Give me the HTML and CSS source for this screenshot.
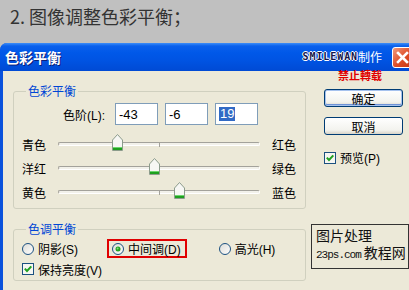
FILE: index.html
```html
<!DOCTYPE html>
<html lang="zh">
<head>
<meta charset="utf-8">
<title>色彩平衡</title>
<link rel="stylesheet" href="styles.css">
</head>
<body>
<div class="heading">2. 图像调整色彩平衡；</div>
<div class="dialog">
  <div class="titlebar">
    <span class="title">色彩平衡</span>
    <span class="brand"><span class="brand-en">SMILEWAN</span>制作</span>
    <span class="close">
      <svg width="13" height="13" viewBox="0 0 13 13"><path d="M2 2 L11 11 M11 2 L2 11" stroke="#fff" stroke-width="2.6" stroke-linecap="square" fill="none"/></svg>
    </span>
  </div>
  <div class="stamp">禁止轉载</div>
  <div class="body">
    <div class="left">
      <div class="group g1">
        <span class="legend">色彩平衡</span>
        <div class="levels">
          <span class="levels-label">色阶(L):</span>
          <span class="field">-43</span>
          <span class="field">-6</span>
          <span class="field"><span class="sel">19</span></span>
        </div>
        <div class="sliders">
          <div class="slider-row">
            <span>青色</span>
            <div class="track"><i class="tick"></i>
              <svg class="thumb" style="left:53px" viewBox="0 0 11 17"><path d="M0.5 6 L5.5 0.5 L10.5 6 V16.5 H0.5 Z" fill="#F7F7F4" stroke="#8C9C8C"/><rect x="1" y="13" width="9" height="3" fill="#1FA01F"/><rect x="1" y="13" width="9" height="1" fill="#6CD66C"/></svg>
            </div>
            <span class="rl">红色</span>
          </div>
          <div class="slider-row">
            <span>洋红</span>
            <div class="track"><i class="tick"></i>
              <svg class="thumb" style="left:90px" viewBox="0 0 11 17"><path d="M0.5 6 L5.5 0.5 L10.5 6 V16.5 H0.5 Z" fill="#F7F7F4" stroke="#8C9C8C"/><rect x="1" y="13" width="9" height="3" fill="#1FA01F"/><rect x="1" y="13" width="9" height="1" fill="#6CD66C"/></svg>
            </div>
            <span class="rl">绿色</span>
          </div>
          <div class="slider-row">
            <span>黄色</span>
            <div class="track"><i class="tick"></i>
              <svg class="thumb" style="left:115px" viewBox="0 0 11 17"><path d="M0.5 6 L5.5 0.5 L10.5 6 V16.5 H0.5 Z" fill="#F7F7F4" stroke="#8C9C8C"/><rect x="1" y="13" width="9" height="3" fill="#1FA01F"/><rect x="1" y="13" width="9" height="1" fill="#6CD66C"/></svg>
            </div>
            <span class="rl">蓝色</span>
          </div>
        </div>
      </div>
      <div class="group g2">
        <span class="legend">色调平衡</span>
        <div class="radios">
          <span class="opt opt1">
            <svg class="radio" viewBox="0 0 12 12"><defs><linearGradient id="rg" x1="0" y1="0" x2="1" y2="1"><stop offset="0" stop-color="#DCDBD5"/><stop offset="1" stop-color="#FFFFFF"/></linearGradient></defs><circle cx="6" cy="6" r="5.5" fill="url(#rg)" stroke="#1C5180"/></svg>
            阴影(S)
          </span>
          <span class="opt opt-box">
            <svg class="radio" viewBox="0 0 12 12"><circle cx="6" cy="6" r="5.5" fill="url(#rg)" stroke="#1C5180"/><circle cx="6" cy="6" r="2.5" fill="#21A121"/><circle cx="5.6" cy="5.6" r="1" fill="#7EDC7E"/></svg>
            中间调(D)
          </span>
          <span class="opt opt3">
            <svg class="radio" viewBox="0 0 12 12"><circle cx="6" cy="6" r="5.5" fill="url(#rg)" stroke="#1C5180"/></svg>
            高光(H)
          </span>
        </div>
        <div class="check-row">
          <svg class="check" viewBox="0 0 12 12"><rect x="0.5" y="0.5" width="11" height="11" fill="#F6F6F2" stroke="#1C5180"/><path d="M2.8 5.6 L5 8 L9.3 3.4" stroke="#21A121" stroke-width="2" fill="none"/></svg>
          保持亮度(V)
        </div>
      </div>
    </div>
    <div class="right">
      <div class="btn btn-default">确定</div>
      <div class="btn">取消</div>
      <div class="preview">
        <svg class="check" viewBox="0 0 12 12"><rect x="0.5" y="0.5" width="11" height="11" fill="#F6F6F2" stroke="#1C5180"/><path d="M2.8 5.6 L5 8 L9.3 3.4" stroke="#21A121" stroke-width="2" fill="none"/></svg>
        预览(P)
      </div>
      <div class="wm">
        <div class="wm-1">图片处理</div>
        <div class="wm-2"><span class="wm-url">23ps.com</span><span class="wm-cn">教程网</span></div>
      </div>
    </div>
  </div>
</div>
</body>
</html>
```
FILE: styles.css
```css
html, body {
  margin: 0;
  padding: 0;
}
body {
  width: 409px;
  height: 290px;
  overflow: hidden;
  background: #C0C0C0;
  font-family: "Liberation Sans", "Noto Sans CJK SC", sans-serif;
  font-size: 12px;
  color: #000;
}
.heading {
  height: 43px;
  box-sizing: border-box;
  padding: 6px 0 0 10px;
  font: 18px/21px "Noto Sans CJK SC", sans-serif;
  color: #333;
}
.dialog {
  position: relative;
  width: 416px;
  background: #0A52DC;
  border-radius: 7px 7px 0 0;
}
.titlebar {
  height: 28px;
  display: flex;
  align-items: center;
  padding: 0 3px 0 5px;
  border-radius: 7px 7px 0 0;
  background: linear-gradient(#3D8EF8 0, #0A60EC 3px, #0058E8 10px, #0054E3 60%, #004AD4 100%);
}
.title {
  font: bold 14px/16px "Noto Sans CJK SC", sans-serif;
  color: #fff;
  text-shadow: 1px 1px 0 #0A1E78;
}
.brand {
  margin-left: auto;
  margin-right: 10px;
  display: flex;
  align-items: center;
  color: #fff;
  font: 12px/14px "Noto Sans CJK SC", sans-serif;
}
.brand-en {
  font: bold 10px/12px "DejaVu Sans Mono", monospace;
  letter-spacing: 0.9px;
  color: #15154A;
  text-shadow: 1px 0 0 #fff, -1px 0 0 #fff, 0 1px 0 #fff, 0 -1px 0 #fff;
}
.close {
  width: 21px;
  height: 21px;
  box-sizing: border-box;
  border: 1px solid #fff;
  border-radius: 3px;
  background: linear-gradient(135deg, #F29A7C, #DD4B26 55%, #C63915);
  display: flex;
  align-items: center;
  justify-content: center;
}
.stamp {
  position: absolute;
  left: 338px;
  top: 26px;
  font: bold 11px/12px "Noto Sans CJK SC", sans-serif;
  color: #E00000;
  z-index: 2;
}
.body {
  display: flex;
  margin-left: 3px;
  height: 219px;
  background: #ECE9D8;
  overflow: hidden;
}
.left {
  width: 303px;
  flex: none;
  box-sizing: border-box;
  padding-left: 10px;
}
.group {
  position: relative;
  border: 1px solid #D0D0BF;
  border-radius: 3px;
  margin-top: 20px;
}
.legend {
  position: absolute;
  top: -9px;
  left: 12px;
  padding: 0 2px;
  background: #ECE9D8;
  color: #0046D5;
  line-height: 16px;
  font-family: "Noto Sans CJK SC", sans-serif;
}
.g1 {
  padding: 11px 0 4px 0;
}
.levels {
  display: flex;
  align-items: center;
  height: 22px;
}
.levels-label {
  width: 101px;
  box-sizing: border-box;
  padding-right: 10px;
  text-align: right;
  font-size: 12px;
}
.field {
  width: 43px;
  height: 22px;
  box-sizing: border-box;
  border: 1px solid #7F9DB9;
  background: #fff;
  margin-right: 7px;
  padding-left: 3px;
  font-size: 13px;
  display: flex;
  align-items: center;
}
.sel {
  background: #316AC5;
  color: #fff;
  line-height: 14px;
  padding: 0 1px;
}
.sliders {
  margin-top: 7px;
}
.slider-row {
  display: grid;
  grid-template-columns: 36px 202px auto;
  align-items: center;
  height: 24px;
  padding-left: 8px;
  font-family: "Noto Sans CJK SC", sans-serif;
}
.rl {
  margin-left: 12px;
}
.track {
  position: relative;
  height: 4px;
  box-sizing: border-box;
  border: 1px solid;
  border-color: #A3A29B #FFFFFF #FFFFFF #A3A29B;
  background: #F2F1EA;
  border-radius: 2px;
}
.tick {
  position: absolute;
  left: 100px;
  top: -1px;
  width: 1px;
  height: 5px;
  background: #A3A29B;
}
.thumb {
  position: absolute;
  top: -9px;
  width: 11px;
  height: 17px;
}
.g2 {
  padding: 9px 0 4px 8px;
}
.radios {
  display: flex;
  align-items: center;
  height: 19px;
}
.opt {
  display: flex;
  align-items: center;
  gap: 4px;
}
.opt1 {
  width: 85px;
}
.opt-box {
  height: 19px;
  box-sizing: border-box;
  border: 2px solid #E00000;
  padding: 0 4px 0 3px;
}
.opt3 {
  margin-left: 32px;
}
.radio {
  width: 12px;
  height: 12px;
  flex: none;
}
.check {
  width: 12px;
  height: 12px;
  flex: none;
}
.check-row {
  margin-top: 4px;
  height: 14px;
  display: flex;
  align-items: center;
  gap: 4px;
}
.right {
  flex: none;
  width: 104px;
  padding-top: 18px;
}
.btn {
  margin-left: 18px;
  width: 79px;
  height: 18px;
  box-sizing: border-box;
  border: 1px solid #003C74;
  border-radius: 3px;
  background: linear-gradient(#FFFFFF, #F3F3EE 75%, #D8D4C8);
  display: flex;
  align-items: center;
  justify-content: center;
  font-family: "Noto Sans CJK SC", sans-serif;
}
.btn-default {
  box-shadow: inset 0 0 0 1px #A6C2EE, inset 0 -1px 0 1px #6F93D6;
}
.btn + .btn {
  margin-top: 10px;
}
.preview {
  margin: 16px 0 0 18px;
  height: 13px;
  display: flex;
  align-items: center;
  gap: 4px;
}
.wm {
  margin: 60px 0 0 5px;
  width: 98px;
  height: 45px;
  box-sizing: border-box;
  border: 1px solid #333;
  padding: 3px 0 0 4px;
  color: #111;
}
.wm-1 {
  font: 14px/15px "Noto Sans CJK SC", sans-serif;
}
.wm-2 {
  display: flex;
  align-items: flex-end;
  height: 18px;
}
.wm-url {
  font: 11px/12px "Liberation Mono", monospace;
  letter-spacing: -1px;
}
.wm-cn {
  margin-left: 3px;
  font: 14px/18px "Noto Sans CJK SC", sans-serif;
}
```
